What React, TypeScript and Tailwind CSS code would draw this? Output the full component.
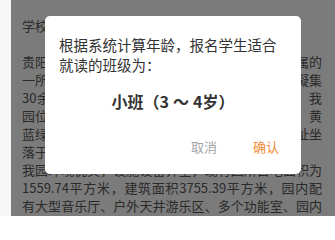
export default function App() {
  return (
    <div className="relative h-[216px] overflow-hidden bg-[#f6f6f6] font-['Noto_Sans_CJK_SC',sans-serif]">
      {/* page content under the dialog */}
      <div className="pl-[22px] pt-[17px] text-[13px] leading-[18px] text-[#555]">
        <h2 className="font-normal">学校简介</h2>
        <div className="mt-[18px] w-[300px] text-justify">
          <p>
            贵阳市南明区第一实验幼儿园是南明区教育局直属的一所省级示范性公办幼儿园，办学经验丰富，汇凝集30余年办园历史，积累了丰富的办园教育经验，我园位于贵阳市南明区花果园中心地带，园区以红、黄蓝绿为主色调，色彩明快，充满童趣。幼儿园新址坐落于花果园中央商务区，交通便利。
          </p>
          <p>
            我园环境优美，设施设备齐全，现有园所占地面积为1559.74平方米，建筑面积3755.39平方米，园内配有大型音乐厅、户外天井游乐区、多个功能室、园内绿化面积广，为幼儿提供了良好的成长环境。
          </p>
        </div>
      </div>

      {/* dialog */}
      <div className="absolute inset-y-0 left-[11px] right-0 flex items-start justify-center bg-black/50 pt-[16px]">
        <div className="flex h-[158px] w-[256px] flex-col rounded-[5px] bg-white">
          <p className="px-[14px] pt-[19px] text-[14.5px] leading-[19.5px] text-[#333]">
            根据系统计算年龄，报名学生适合就读的班级为：
          </p>
          <p className="mt-[16px] text-center text-[16px] font-bold leading-[22px] text-[#333]">
            小班（3<span className="mx-[4px]">～</span>4岁）
          </p>
          <div className="mt-auto flex justify-end gap-[36px] pb-[18px] pr-[22px] text-[13px] leading-[18px]">
            <button className="text-[#a3a3a3]">取消</button>
            <button className="text-[#f08a35]">确认</button>
          </div>
        </div>
      </div>
    </div>
  );
}
